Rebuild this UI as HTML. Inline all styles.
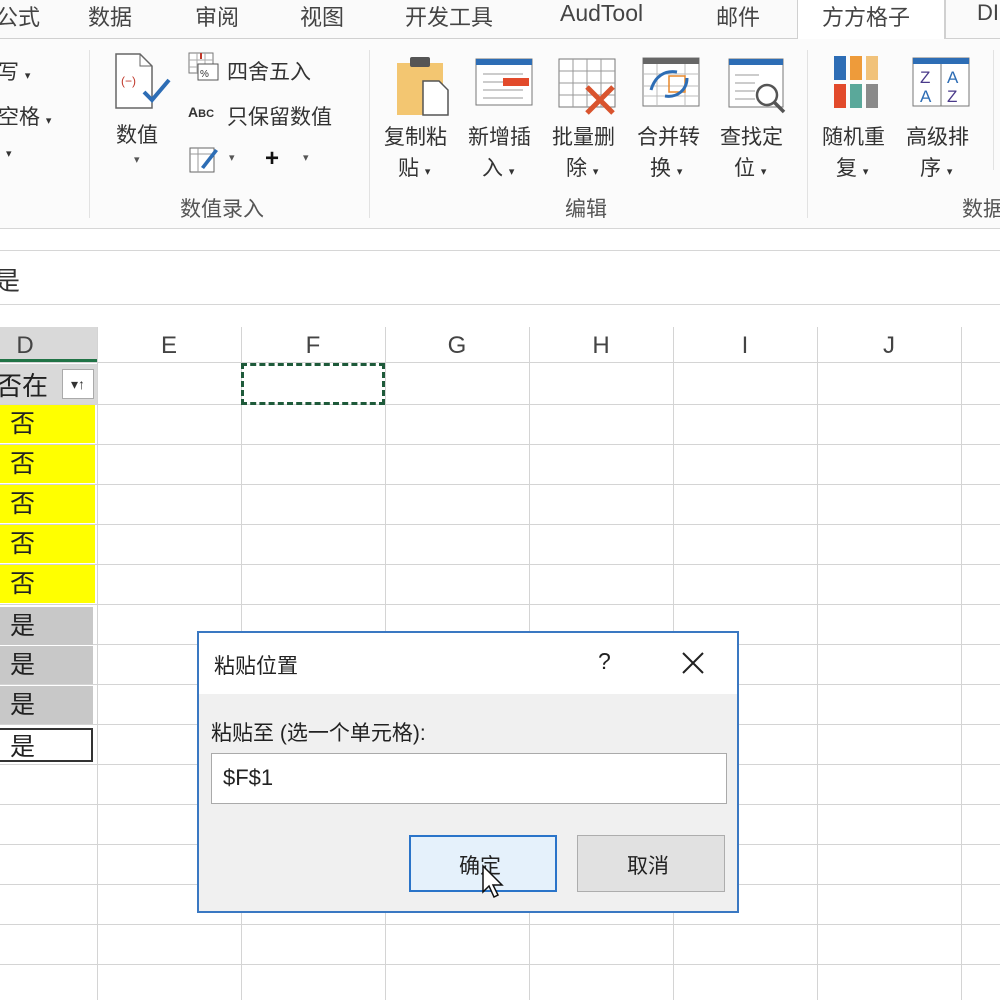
<!DOCTYPE html>
<html><head><meta charset="utf-8"><style>
*{margin:0;padding:0;box-sizing:border-box}
body{width:1000px;height:1000px;overflow:hidden;background:#fff;font-family:"Liberation Sans","Noto Sans CJK SC",sans-serif;color:#333;position:relative}
.a{position:absolute;white-space:nowrap}
.tab{font-size:22px;top:0;color:#444}
.rb{font-size:21px;color:#333}
.hl{position:absolute;left:0;width:1000px;height:1px;background:#d4d4d4}
.vl{position:absolute;top:327px;height:673px;width:1px;background:#d4d4d4}
.ch{font-size:24px;color:#444;top:332px;width:144px;text-align:center}
.cell{position:absolute;left:0;width:95px;height:38px;font-size:25px;padding-left:10px;line-height:38px;color:#222}
</style></head><body>
<!-- tabs -->
<div class="a" style="left:0;top:0;width:1000px;height:38px;background:#fafafa"></div>
<div class="a tab" style="left:-4px">公式</div>
<div class="a tab" style="left:88px">数据</div>
<div class="a tab" style="left:195px">审阅</div>
<div class="a tab" style="left:300px">视图</div>
<div class="a tab" style="left:405px">开发工具</div>
<div class="a tab" style="left:560px;font-size:23px">AudTool</div>
<div class="a tab" style="left:716px">邮件</div>
<div class="a" style="left:797px;top:-2px;width:148px;height:41px;background:#fff;border:1px solid #d0d0d0;border-bottom:none"></div>
<div class="a tab" style="left:822px">方方格子</div>
<div class="a" style="left:945px;top:-2px;width:60px;height:41px;border-left:1px solid #d0d0d0"></div>
<div class="a tab" style="left:977px">DI</div>
<div class="a" style="left:0;top:38px;width:797px;height:1px;background:#d0d0d0"></div>
<div class="a" style="left:945px;top:38px;width:60px;height:1px;background:#d0d0d0"></div>
<!-- ribbon -->
<div class="a" style="left:0;top:39px;width:1000px;height:190px;background:#fbfbfb"></div>
<div class="a rb" style="left:-2px;top:56px">写 <span style="font-size:11px">▾</span></div>
<div class="a rb" style="left:-2px;top:101px">空格 <span style="font-size:11px">▾</span></div>
<div class="a rb" style="left:6px;top:147px;font-size:11px">▾</div>
<div class="a" style="left:89px;top:50px;width:1px;height:168px;background:#e2e2e2"></div>
<svg class="a" style="left:114px;top:52px" width="60" height="60"><path d="M2 2h24l12 12v42H2z" fill="#fff" stroke="#666" stroke-width="1.5"/><path d="M26 2v12h12" fill="none" stroke="#666"/><text x="7" y="33" font-size="12" fill="#c0392b" font-family="Liberation Sans">(−)</text><path d="M30 40l8 8 17-20" fill="none" stroke="#2d6db5" stroke-width="4"/></svg>
<div class="a rb" style="left:116px;top:119px">数值</div>
<div class="a" style="left:134px;top:153px;font-size:11px;color:#555">▾</div>
<svg class="a" style="left:188px;top:52px" width="32" height="30"><rect x="1" y="1" width="24" height="20" fill="#fff" stroke="#777"/><path d="M9 1v20M17 1v20M1 8h24M1 15h24" stroke="#aaa"/><rect x="10" y="12" width="20" height="16" fill="#fff" stroke="#555"/><text x="12" y="25" font-size="10" fill="#333">%</text><path d="M13 1v6" stroke="#c0392b" stroke-width="2"/></svg>
<div class="a rb" style="left:227px;top:56px">四舍五入</div>
<div class="a" style="left:188px;top:104px;font-size:14px;font-weight:bold;color:#333">A<span style="font-size:11px">BC</span></div>
<div class="a rb" style="left:227px;top:101px">只保留数值</div>
<svg class="a" style="left:189px;top:143px" width="32" height="32"><rect x="1" y="5" width="24" height="24" fill="#fff" stroke="#666"/><path d="M1 11h24M9 5v24" stroke="#999"/><path d="M12 24l14-18 3 2-14 18z" fill="#2d6db5"/></svg>
<div class="a" style="left:229px;top:151px;font-size:11px;color:#555">▾</div>
<div class="a" style="left:265px;top:145px;font-size:24px;font-weight:bold;color:#111">+</div>
<div class="a" style="left:303px;top:151px;font-size:11px;color:#555">▾</div>
<div class="a rb" style="left:180px;top:193px;color:#555">数值录入</div>
<div class="a" style="left:369px;top:50px;width:1px;height:168px;background:#e2e2e2"></div>
<!-- edit group -->
<svg class="a" style="left:395px;top:55px" width="60" height="62"><rect x="2" y="8" width="46" height="52" fill="#f3c671"/><rect x="15" y="2" width="20" height="10" rx="2" fill="#555"/><path d="M28 26h16l9 9v25H28z" fill="#fff" stroke="#555" stroke-width="1.5"/></svg>
<div class="a rb" style="left:384px;top:121px">复制粘</div>
<div class="a rb" style="left:398px;top:152px">贴 <span style="font-size:11px">▾</span></div>
<svg class="a" style="left:475px;top:58px" width="60" height="50"><rect x="1" y="1" width="56" height="46" fill="#fff" stroke="#777"/><rect x="1" y="1" width="56" height="6" fill="#2d6db5"/><path d="M8 16h40M8 24h20M8 32h40M8 40h40" stroke="#999"/><rect x="28" y="20" width="26" height="8" fill="#e24a2b"/></svg>
<div class="a rb" style="left:468px;top:121px">新增插</div>
<div class="a rb" style="left:482px;top:152px">入 <span style="font-size:11px">▾</span></div>
<svg class="a" style="left:557px;top:57px" width="64" height="60"><rect x="2" y="2" width="56" height="48" fill="#fff" stroke="#777"/><path d="M16 2v48M30 2v48M44 2v48M2 14h56M2 26h56M2 38h56" stroke="#999"/><path d="M30 30l26 26M56 30l-26 26" stroke="#d9542e" stroke-width="5"/></svg>
<div class="a rb" style="left:552px;top:121px">批量删</div>
<div class="a rb" style="left:566px;top:152px">除 <span style="font-size:11px">▾</span></div>
<svg class="a" style="left:641px;top:56px" width="60" height="52"><rect x="2" y="2" width="56" height="48" fill="#fff" stroke="#777"/><rect x="2" y="2" width="56" height="6" fill="#666"/><path d="M2 18h56M2 30h56M2 40h56M16 8v42M44 8v42" stroke="#bbb"/><rect x="28" y="20" width="16" height="16" fill="none" stroke="#e8892b" stroke-width="1.5"/><path d="M10 34c4-14 14-20 26-18M24 40c12 2 22-6 22-18" fill="none" stroke="#2d6db5" stroke-width="3"/></svg>
<div class="a rb" style="left:637px;top:121px">合并转</div>
<div class="a rb" style="left:650px;top:152px">换 <span style="font-size:11px">▾</span></div>
<svg class="a" style="left:727px;top:57px" width="62" height="60"><rect x="2" y="2" width="54" height="48" fill="#fff" stroke="#777"/><rect x="2" y="2" width="54" height="6" fill="#2d6db5"/><path d="M8 18h24M8 26h20M8 34h20M8 42h20" stroke="#999"/><circle cx="40" cy="38" r="10" fill="#fff" stroke="#555" stroke-width="2.5"/><path d="M47 45l10 10" stroke="#555" stroke-width="3.5"/></svg>
<div class="a rb" style="left:720px;top:121px">查找定</div>
<div class="a rb" style="left:734px;top:152px">位 <span style="font-size:11px">▾</span></div>
<div class="a rb" style="left:565px;top:193px;color:#555">编辑</div>
<div class="a" style="left:807px;top:50px;width:1px;height:168px;background:#e2e2e2"></div>
<svg class="a" style="left:833px;top:56px" width="48" height="54"><rect x="1" y="0" width="12" height="24" fill="#2d6db5"/><rect x="17" y="0" width="12" height="24" fill="#ee9b3a"/><rect x="33" y="0" width="12" height="24" fill="#f1c27a"/><rect x="1" y="28" width="12" height="24" fill="#e24a2b"/><rect x="17" y="28" width="12" height="24" fill="#5aa89a"/><rect x="33" y="28" width="12" height="24" fill="#8a8a8a"/></svg>
<div class="a rb" style="left:822px;top:121px">随机重</div>
<div class="a rb" style="left:836px;top:152px">复 <span style="font-size:11px">▾</span></div>
<svg class="a" style="left:912px;top:57px" width="60" height="52"><rect x="1" y="1" width="56" height="48" fill="#fff" stroke="#777"/><rect x="1" y="1" width="56" height="6" fill="#2d6db5"/><path d="M29 7v42" stroke="#777"/><text x="8" y="26" font-size="17" fill="#4a3a8a">Z</text><text x="8" y="45" font-size="17" fill="#2d6db5">A</text><text x="35" y="26" font-size="17" fill="#2d6db5">A</text><text x="35" y="45" font-size="17" fill="#4a3a8a">Z</text></svg>
<div class="a rb" style="left:906px;top:121px">高级排</div>
<div class="a rb" style="left:920px;top:152px">序 <span style="font-size:11px">▾</span></div>
<div class="a rb" style="left:962px;top:193px;color:#555">数据</div>
<div class="a" style="left:993px;top:50px;width:1px;height:120px;background:#e2e2e2"></div>
<div class="a" style="left:0;top:228px;width:1000px;height:1px;background:#d6d6d6"></div>
<!-- formula bar -->
<div class="hl" style="top:250px;background:#d6d6d6"></div>
<div class="a" style="left:-6px;top:261px;font-size:26px;color:#333">是</div>
<div class="hl" style="top:304px;background:#d6d6d6"></div>
<!-- col headers -->
<div class="a" style="left:0;top:327px;width:97px;height:35px;background:#d9d9d9;border-bottom:3px solid #217346"></div>
<div class="a ch" style="left:-47px">D</div>
<div class="a ch" style="left:97px">E</div>
<div class="a ch" style="left:241px">F</div>
<div class="a ch" style="left:385px">G</div>
<div class="a ch" style="left:529px">H</div>
<div class="a ch" style="left:673px">I</div>
<div class="a ch" style="left:817px">J</div>
<div class="hl" style="top:362px"></div>
<div class="hl" style="top:404px"></div><div class="hl" style="top:444px"></div><div class="hl" style="top:484px"></div><div class="hl" style="top:524px"></div><div class="hl" style="top:564px"></div><div class="hl" style="top:604px"></div><div class="hl" style="top:644px"></div><div class="hl" style="top:684px"></div><div class="hl" style="top:724px"></div><div class="hl" style="top:764px"></div><div class="hl" style="top:804px"></div><div class="hl" style="top:844px"></div><div class="hl" style="top:884px"></div><div class="hl" style="top:924px"></div><div class="hl" style="top:964px"></div>
<div class="vl" style="left:97px"></div><div class="vl" style="left:241px"></div><div class="vl" style="left:385px"></div><div class="vl" style="left:529px"></div><div class="vl" style="left:673px"></div><div class="vl" style="left:817px"></div><div class="vl" style="left:961px"></div>
<!-- D cells -->
<div class="a" style="left:0;top:364px;width:97px;height:40px;background:#d9d9d9"></div>
<div class="a" style="left:-4px;top:366px;font-size:26px;color:#222">否在</div>
<div class="a" style="left:62px;top:369px;width:32px;height:30px;background:#fff;border:1px solid #aaa;font-size:14px;text-align:center;line-height:28px;color:#333">▾↑</div>
<div class="cell" style="top:405px;background:#ffff00">否</div>
<div class="cell" style="top:445px;background:#ffff00">否</div>
<div class="cell" style="top:485px;background:#ffff00">否</div>
<div class="cell" style="top:525px;background:#ffff00">否</div>
<div class="cell" style="top:565px;background:#ffff00">否</div>
<div class="cell" style="top:607px;width:93px;background:#c8c8c8">是</div>
<div class="cell" style="top:646px;width:93px;background:#c8c8c8">是</div>
<div class="cell" style="top:686px;width:93px;background:#c8c8c8">是</div>
<div class="cell" style="top:728px;width:93px;height:34px;line-height:34px;background:#fff;border:2px solid #333;border-left:none">是</div>
<!-- marching ants -->
<div class="a" style="left:241px;top:363px;width:144px;height:42px;border:3px dashed #1e5a3a"></div>
<!-- dialog -->
<div class="a" style="left:197px;top:631px;width:542px;height:282px;background:#f0f0f0;border:2px solid #3a78c2">
 <div class="a" style="left:0;top:0;width:538px;height:61px;background:#fff"></div>
 <div class="a" style="left:15px;top:17px;font-size:21px;color:#222">粘贴位置</div>
 <div class="a" style="left:399px;top:15px;font-size:23px;color:#222">?</div>
 <svg class="a" style="left:482px;top:18px" width="24" height="24"><path d="M2 2l20 20M22 2L2 22" stroke="#222" stroke-width="2"/></svg>
 <div class="a" style="left:12px;top:84px;font-size:21px;color:#222">粘贴至 (选一个单元格):</div>
 <div class="a" style="left:12px;top:120px;width:516px;height:51px;background:#fff;border:1px solid #aaa"></div>
 <div class="a" style="left:24px;top:132px;font-size:22px;color:#222">$F$1</div>
 <div class="a" style="left:210px;top:202px;width:148px;height:57px;background:#e5f1fb;border:2px solid #2a74c9"></div>
 <div class="a" style="left:260px;top:217px;font-size:21px;color:#222">确定</div>
 <div class="a" style="left:378px;top:202px;width:148px;height:57px;background:#e1e1e1;border:1px solid #adadad"></div>
 <div class="a" style="left:428px;top:217px;font-size:21px;color:#222">取消</div>
 <svg class="a" style="left:282px;top:231px" width="24" height="36"><path d="M2 2v26l6-6 5 11 4-2-5-10h9z" fill="#fff" stroke="#111" stroke-width="1.5"/></svg>
</div>
</body></html>
